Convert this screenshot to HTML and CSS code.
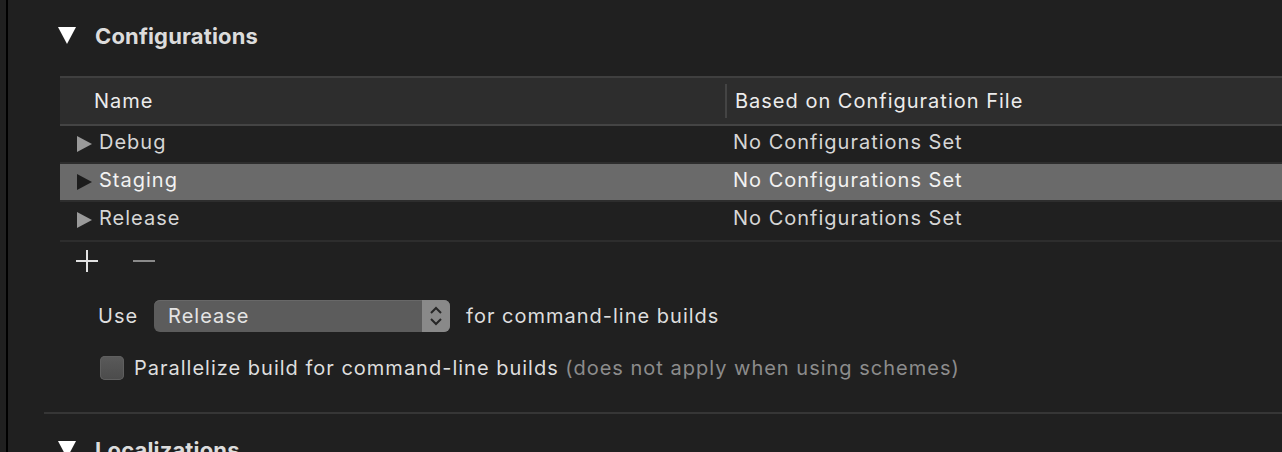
FILE: index.html
```html
<!DOCTYPE html>
<html lang="en">
<head>
<meta charset="utf-8">
<title>Configurations</title>
<link rel="stylesheet" href="styles.css">
</head>
<body>
<div class="window">
  <div class="gutter"></div>
  <div class="rule"></div>
  <div class="main">
    <section class="section">
      <div class="section-head">
        <svg class="disclosure-open" width="18" height="17" viewBox="0 0 18 17"><polygon points="0,0 18,0 9,17" fill="#ffffff"/></svg>
        <span class="section-title">Configurations</span>
      </div>

      <div class="table">
        <div class="thead">
          <div class="th th-name">Name</div>
          <div class="th-divider"></div>
          <div class="th th-file">Based on Configuration File</div>
        </div>
        <div class="row">
          <div class="cell cell-name">
            <svg class="disclosure" width="15" height="16" viewBox="0 0 15 16"><polygon points="0,0 15,8 0,16" /></svg>
            <span>Debug</span>
          </div>
          <div class="cell cell-file">No Configurations Set</div>
        </div>
        <div class="row selected">
          <div class="cell cell-name">
            <svg class="disclosure" width="15" height="16" viewBox="0 0 15 16"><polygon points="0,0 15,8 0,16" /></svg>
            <span>Staging</span>
          </div>
          <div class="cell cell-file">No Configurations Set</div>
        </div>
        <div class="row last">
          <div class="cell cell-name">
            <svg class="disclosure" width="15" height="16" viewBox="0 0 15 16"><polygon points="0,0 15,8 0,16" /></svg>
            <span>Release</span>
          </div>
          <div class="cell cell-file">No Configurations Set</div>
        </div>
      </div>

      <div class="tools">
        <svg class="tool" width="22" height="22" viewBox="0 0 22 22"><path d="M11 0V22M0 11H22" stroke="#e2e2e2" stroke-width="2" fill="none"/></svg>
        <svg class="tool" width="22" height="22" viewBox="0 0 22 22"><path d="M0 11H22" stroke="#8a8a8a" stroke-width="2" fill="none"/></svg>
      </div>

      <div class="use-row">
        <span class="label">Use</span>
        <div class="popup">
          <span class="popup-value">Release</span>
          <span class="popup-stepper">
            <svg width="14" height="22" viewBox="0 0 14 22"><path d="M2 8L7 3L12 8M2 14L7 19L12 14" stroke="#262626" stroke-width="2" fill="none"/></svg>
          </span>
        </div>
        <span class="label">for command-line builds</span>
      </div>

      <div class="check-row">
        <span class="checkbox"></span>
        <span class="label">Parallelize build for command-line builds <span class="muted">(does not apply when using schemes)</span></span>
      </div>
    </section>

    <section class="section next">
      <div class="section-head">
        <svg class="disclosure-open" width="18" height="17" viewBox="0 0 18 17"><polygon points="0,0 18,0 9,17" fill="#ffffff"/></svg>
        <span class="section-title">Localizations</span>
      </div>
    </section>
  </div>
</div>
</body>
</html>
```

FILE: styles.css
```css
* { box-sizing: border-box; }

html, body {
  margin: 0;
  padding: 0;
  background: #202020;
}

body {
  width: 1282px;
  height: 452px;
  overflow: hidden;
  font-family: "Inter", "Noto Sans", sans-serif;
  font-size: 20px;
  letter-spacing: 1px;
  color: #dedede;
}

.window {
  display: flex;
  height: 452px;
}

.gutter {
  width: 6px;
  flex: none;
  background: #202020;
}

.rule {
  width: 2px;
  flex: none;
  background: #000000;
}

.main {
  flex: 1;
  display: flex;
  flex-direction: column;
  padding-left: 36px;
}

.section {
  display: flex;
  flex-direction: column;
  border-bottom: 2px solid #363636;
  padding-bottom: 32px;
}

.section.next {
  border-bottom: none;
}

.section-head {
  height: 72px;
  flex: none;
  display: flex;
  align-items: center;
  padding-left: 14px;
  gap: 19px;
}

.disclosure-open {
  flex: none;
  margin-top: -1px;
}

.section-title {
  font-weight: 700;
  font-size: 22px;
  letter-spacing: 0.15px;
  color: #dcdcdc;
}

.table {
  margin-top: 4px;
  margin-left: 16px;
  border-top: 2px solid #3f3f3f;
}

.thead {
  height: 48px;
  display: flex;
  align-items: center;
  background: #2d2d2d;
  border-bottom: 2px solid #444444;
}

.th {
  color: #ececec;
}

.th-name {
  width: 665px;
  padding-left: 34px;
}

.th-divider {
  width: 2px;
  height: 34px;
  background: #444444;
  flex: none;
}

.th-file {
  padding-left: 8px;
}

.row {
  height: 38px;
  padding-bottom: 4px;
  display: flex;
  align-items: center;
  border-bottom: 2px solid #2d2d2d;
  color: #d6d6d6;
}

.row.last {
  height: 40px;
  padding-bottom: 6px;
}

.row.selected {
  background: #6a6a6a;
  color: #f2f2f2;
}

.cell-name {
  width: 673px;
  display: flex;
  align-items: center;
  padding-left: 17px;
  gap: 7px;
}

.disclosure {
  fill: #9a9a9a;
  flex: none;
  margin-top: 3px;
}

.selected .disclosure {
  fill: #1c1c1c;
}

.tools {
  display: flex;
  align-items: center;
  height: 38px;
  padding-left: 32px;
  gap: 35px;
}

.use-row {
  display: flex;
  align-items: center;
  height: 32px;
  margin-top: 20px;
  padding-left: 54px;
  gap: 16px;
}

.label {
  color: #dedede;
}

.popup {
  width: 296px;
  height: 32px;
  flex: none;
  display: flex;
  align-items: stretch;
  border-radius: 6px;
  overflow: hidden;
  background: #5c5c5c;
  box-shadow: inset 0 1px 0 #686868;
}

.popup-value {
  flex: 1;
  display: flex;
  align-items: center;
  padding-left: 14px;
  color: #e4e4e4;
}

.popup-stepper {
  width: 28px;
  flex: none;
  display: flex;
  align-items: center;
  justify-content: center;
  background: #898989;
}

.check-row {
  display: flex;
  align-items: center;
  height: 24px;
  margin-top: 24px;
  padding-left: 56px;
  gap: 10px;
}

.checkbox {
  width: 24px;
  height: 24px;
  flex: none;
  border-radius: 5px;
  background: linear-gradient(#5a5a5a, #4b4b4b);
  box-shadow: inset 0 0 0 1px #5f5f5f;
}

.muted {
  color: #8c8c8c;
}
```
